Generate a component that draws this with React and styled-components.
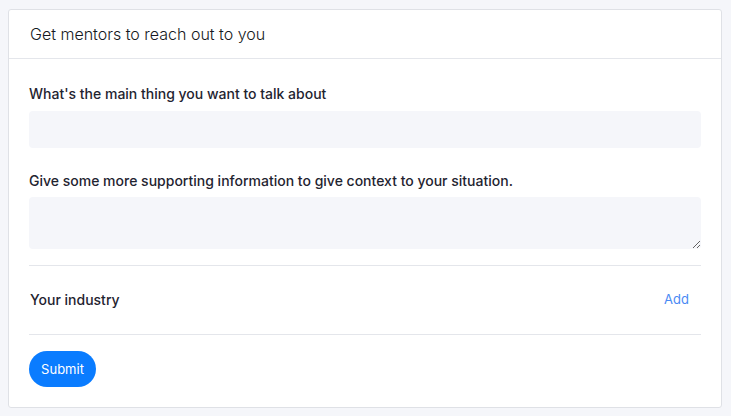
import React from "react";
import styled, { createGlobalStyle } from "styled-components";

const GlobalStyle = createGlobalStyle`
  html, body {
    background: #f5f6fa;
  }
  body {
    margin: 9px 9px 8px 8px;
    font-family: "Inter", "Noto Sans", sans-serif;
    color: #1f2430;
  }
  * {
    box-sizing: border-box;
  }
`;

const Card = styled.section`
  background: #ffffff;
  border: 1px solid #dfe1e6;
  border-radius: 3px;
`;

const Header = styled.header`
  height: 49px;
  padding: 0 21px;
  display: flex;
  align-items: center;
  border-bottom: 1px solid #e4e6eb;

  h2 {
    margin: 0;
    font-size: 16px;
    font-weight: 300;
    color: #151922;
  }
`;

const Body = styled.form`
  padding: 25px 20px 20px;
  display: flex;
  flex-direction: column;
`;

const Field = styled.div`
  display: flex;
  flex-direction: column;
  margin-bottom: ${(p) => p.$mb || 0}px;
`;

const Label = styled.label`
  font-size: 14px;
  font-weight: 500;
  line-height: 20px;
  margin-bottom: ${(p) => p.$gap || 7}px;
  color: #1f2430;
`;

const Input = styled.input`
  height: 37px;
  border: none;
  border-radius: 4px;
  background: #f5f6fa;
  padding: 0 12px;
  font: inherit;
  outline: none;
`;

const TextArea = styled.textarea`
  height: 52px;
  border: none;
  border-radius: 4px;
  background: #f5f6fa;
  padding: 8px 12px;
  font: inherit;
  outline: none;
  resize: vertical;
`;

const Row = styled.div`
  height: 70px;
  margin-top: 16px;
  border-top: 1px solid #e4e6eb;
  border-bottom: 1px solid #e4e6eb;
  display: flex;
  align-items: center;
  justify-content: space-between;
  padding: 0 12px 2px 1px;

  span {
    font-size: 14px;
    font-weight: 500;
  }
`;

const LinkButton = styled.button`
  background: none;
  border: none;
  padding: 0;
  font-family: inherit;
  font-size: 13px;
  color: #4a8af4;
  cursor: pointer;
`;

const SubmitButton = styled.button`
  align-self: flex-start;
  margin-top: 16px;
  width: 67px;
  height: 36px;
  border: none;
  border-radius: 18px;
  background: #0a7cff;
  color: #ffffff;
  font-family: inherit;
  font-size: 13px;
  font-weight: 400;
  cursor: pointer;
`;

const App = () => {
  return (
    <>
      <GlobalStyle />
      <Card>
        <Header>
          <h2>Get mentors to reach out to you</h2>
        </Header>
        <Body onSubmit={(e) => e.preventDefault()}>
          <Field $mb={23}>
            <Label>What's the main thing you want to talk about</Label>
            <Input type="text" />
          </Field>
          <Field>
            <Label $gap={6}>
              Give some more supporting information to give context to your
              situation.
            </Label>
            <TextArea />
          </Field>
          <Row>
            <span>Your industry</span>
            <LinkButton type="button">Add</LinkButton>
          </Row>
          <SubmitButton type="submit">Submit</SubmitButton>
        </Body>
      </Card>
    </>
  );
};

export default App;
